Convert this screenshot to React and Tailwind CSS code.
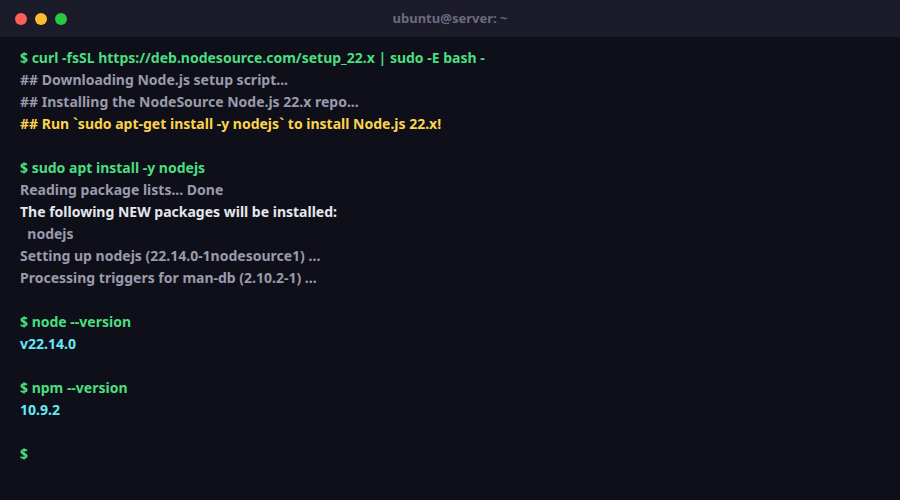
import React from 'react';

const lines = [
  ['$ curl -fsSL https://deb.nodesource.com/setup_22.x | sudo -E bash -', 'text-[#4ade80]'],
  ['## Downloading Node.js setup script...', 'text-[#9a9aab]'],
  ['## Installing the NodeSource Node.js 22.x repo...', 'text-[#9a9aab]'],
  ['## Run `sudo apt-get install -y nodejs` to install Node.js 22.x!', 'text-[#fcd34d]'],
  ['', ''],
  ['$ sudo apt install -y nodejs', 'text-[#4ade80]'],
  ['Reading package lists... Done', 'text-[#9a9aab]'],
  ['The following NEW packages will be installed:', 'text-[#e5e7eb]'],
  ['  nodejs', 'text-[#9a9aab]'],
  ['Setting up nodejs (22.14.0-1nodesource1) ...', 'text-[#9a9aab]'],
  ['Processing triggers for man-db (2.10.2-1) ...', 'text-[#9a9aab]'],
  ['', ''],
  ['$ node --version', 'text-[#4ade80]'],
  ['v22.14.0', 'text-[#67e8f9]'],
  ['', ''],
  ['$ npm --version', 'text-[#4ade80]'],
  ['10.9.2', 'text-[#67e8f9]'],
  ['', ''],
  ['$', 'text-[#4ade80]'],
];

export default function App() {
  return (
    <div className="w-[900px] h-[500px] bg-[#0f0f1a] flex flex-col font-['Liberation_Sans',Arial,sans-serif] font-bold">
      {/* Title bar */}
      <div className="h-[37px] bg-[#1b1b2a] flex items-center px-[15px] relative">
        <div className="flex gap-[8px]">
          <span className="w-[12px] h-[12px] rounded-full bg-[#ff5f57]" />
          <span className="w-[12px] h-[12px] rounded-full bg-[#febc2e]" />
          <span className="w-[12px] h-[12px] rounded-full bg-[#28c840]" />
        </div>
        <div className="absolute inset-0 flex items-center justify-center text-[13px] text-[#6b6b7e]">
          ubuntu@server: ~
        </div>
      </div>
      {/* Output */}
      <div className="px-[20px] pt-[10px] text-[14px]">
        {lines.map(([t, c], i) => (
          <div key={i} className={`h-[22px] leading-[22px] whitespace-pre ${c}`}>{t}</div>
        ))}
      </div>
    </div>
  );
}
